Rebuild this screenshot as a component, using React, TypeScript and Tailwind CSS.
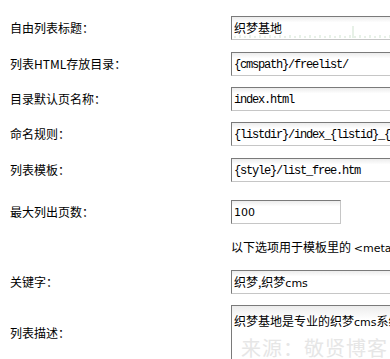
import React from "react";

const cjk = "font-['Noto_Sans_CJK_SC','Liberation_Sans',sans-serif]";
const mono = "font-['Liberation_Mono','Noto_Sans_CJK_SC',monospace] tracking-[-1.2px]";
const latin = "font-['DejaVu_Sans','Noto_Sans_CJK_SC',sans-serif] text-[11px]";

const boxCls =
  "box-border border-t border-l border-t-[#7a7a7a] border-l-[#7a7a7a] border-b border-r border-b-[#c6c6c6] border-r-[#c6c6c6] bg-linear-to-b from-[#ececec] to-white to-[25%] text-black";

function Row({ label, h, children }: { label: string; h: string; children: React.ReactNode }) {
  return (
    <div className={`flex items-center ${h}`}>
      <div className={`w-[231px] shrink-0 pl-[10px] text-[12px] text-black ${cjk}`}>{label}</div>
      <div className="flex min-w-0 flex-1 items-center">{children}</div>
    </div>
  );
}

function Field({ children, w = "w-[260px]", ruler }: { children: React.ReactNode; w?: string; ruler?: boolean }) {
  return (
    <div className={`relative flex h-[24px] shrink-0 items-center overflow-hidden whitespace-nowrap pl-[2px] ${w} ${boxCls}`}>
      <span className="text-[12px] leading-none">{children}</span>
      {ruler && (
        <svg className="absolute bottom-[1px] left-0" width="260" height="12" aria-hidden>
          {Array.from({ length: 52 }).map((_, i) => (
            <line key={i} x1={i * 5 + 3} x2={i * 5 + 3} y1={i % 2 ? 9 : 10} y2={12} stroke="#cfe3cf" strokeWidth="1" />
          ))}
          <line x1="121" x2="121" y1="0" y2="12" stroke="#cfe3cf" strokeWidth="1" />
        </svg>
      )}
    </div>
  );
}

export default function App() {
  return (
    <div className="h-[359px] w-[390px] overflow-hidden bg-white pt-[10px]">
      <Row label="自由列表标题：" h="h-[36px]">
        <Field ruler>
          <span className={cjk}>织梦基地</span>
        </Field>
      </Row>
      <Row label="列表HTML存放目录：" h="h-[36px]">
        <Field>
          <span className={mono}>{"{cmspath}/freelist/"}</span>
        </Field>
      </Row>
      <Row label="目录默认页名称：" h="h-[34px]">
        <Field>
          <span className={mono}>index.html</span>
        </Field>
      </Row>
      <Row label="命名规则：" h="h-[36px]">
        <Field>
          <span className={mono}>{"{listdir}/index_{listid}_{page}.html"}</span>
        </Field>
      </Row>
      <Row label="列表模板：" h="h-[36px]">
        <Field>
          <span className={mono}>{"{style}/list_free.htm"}</span>
        </Field>
      </Row>
      <Row label="最大列出页数：" h="h-[48px]">
        <Field w="w-[110px]">
          <span className={latin}>100</span>
        </Field>
      </Row>
      <Row label="" h="h-[24px]">
        <span className={`whitespace-nowrap text-[12px] text-black ${cjk}`}>
          以下选项用于模板里的 <span className={latin}>&lt;meta name="keywords"&gt;</span>
        </span>
      </Row>
      <Row label="关键字：" h="h-[44px]">
        <Field>
          <span className={cjk}>
            织梦,织梦<span className={latin}>cms</span>
          </span>
        </Field>
      </Row>
      <Row label="列表描述：" h="h-[58px]">
        <div className={`relative h-[56px] w-[260px] shrink-0 overflow-hidden whitespace-nowrap pl-[2px] pt-[2px] ${boxCls}`}>
          <span className={`text-[12px] leading-[14px] ${cjk}`}>
            织梦基地是专业的织梦<span className={latin}>cms</span>系统学习网站
          </span>
          <div className={`absolute left-[9px] top-[32px] text-[20px] leading-none tracking-[1px] text-[#e6e6e6] ${cjk}`}>
            来源：敬贤博客
          </div>
        </div>
      </Row>
    </div>
  );
}
